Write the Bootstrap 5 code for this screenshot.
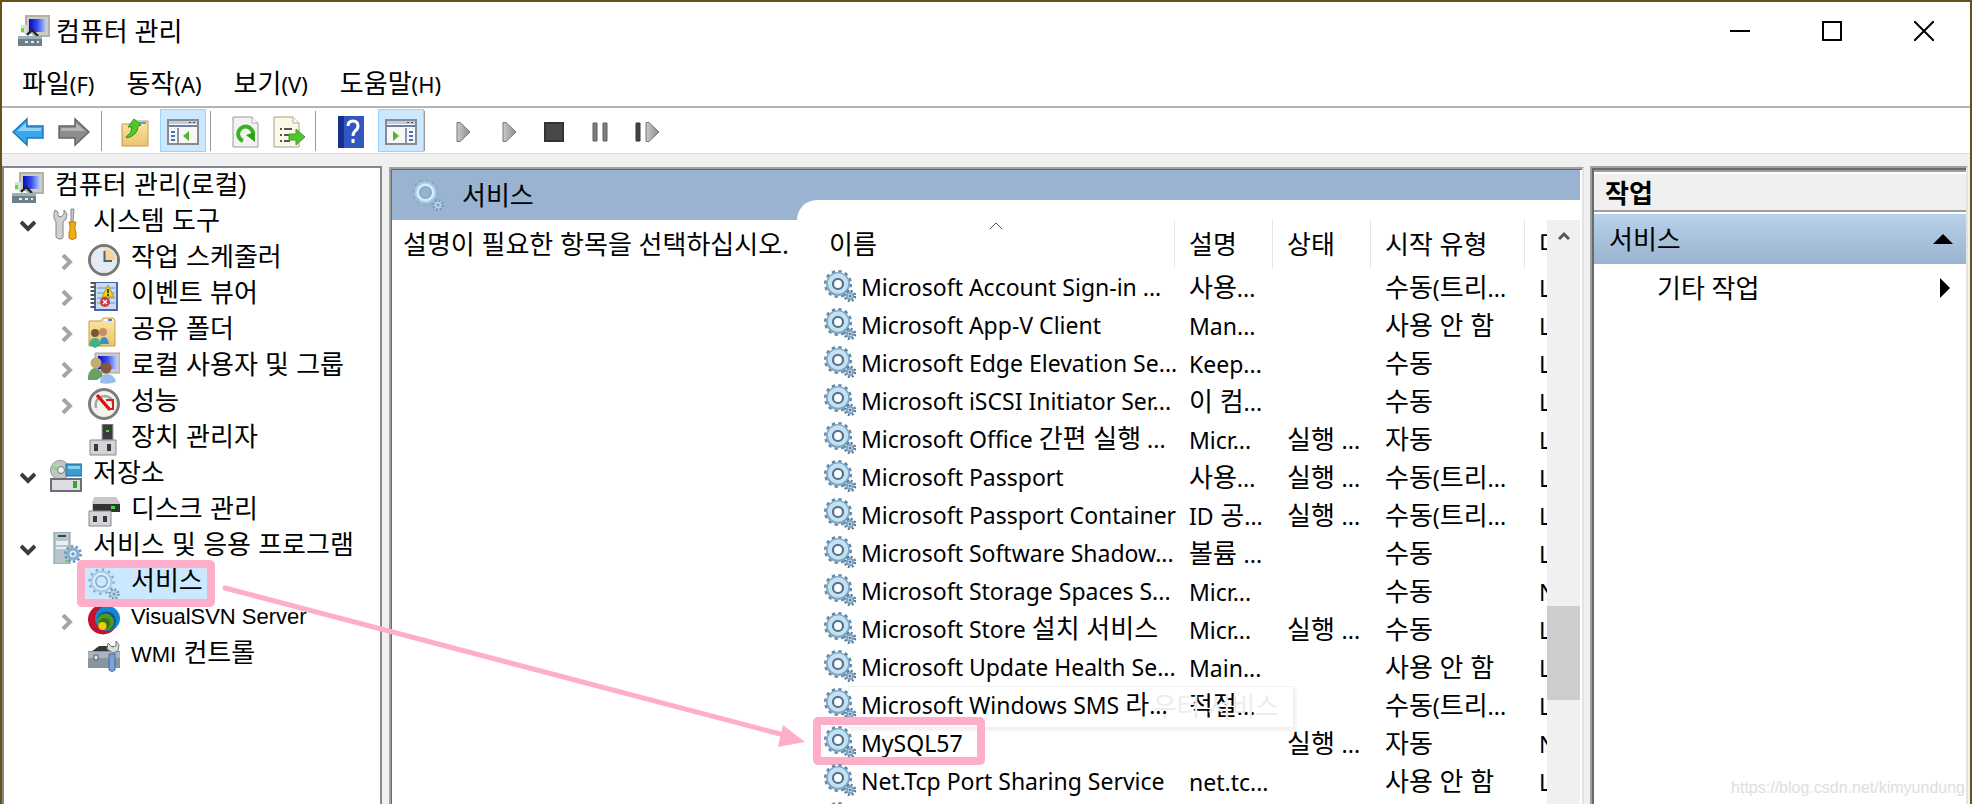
<!DOCTYPE html>
<html lang="ko">
<head>
<meta charset="utf-8">
<meta name="viewport" content="width=device-width, initial-scale=1">
<title>컴퓨터 관리</title>
<link href="https://cdn.jsdelivr.net/npm/bootstrap@5.3.0/dist/css/bootstrap.min.css" rel="stylesheet">
<style>
  :root { --ui: "Noto Sans", "Noto Sans CJK KR", sans-serif; --pink: #ffaec9; }
  body { font-family: var(--ui); font-size: 26px; color: #000; background: #f0f0f0; }
  a, a:hover { color: #000; text-decoration: none; }
  svg { display: block; flex: none; }
  .app { border: 2px solid #6b4f18; border-bottom: 0; }
  .title-bar { height: 58px; padding-left: 16px; gap: 6px; line-height: 58px; }
  .title-bar h1 { font-size: 26px; line-height: 58px; font-weight: 400; }
  .win-btn { width: 92px; height: 56px; border: 0; background: none; padding: 0; display: flex; align-items: center; justify-content: center; }
  .menu-bar { height: 46px; padding-left: 20px; gap: 32px; line-height: 46px; }
  .latin { font-size: 22px; }
  .tool-bar { height: 48px; border-top: 2px solid #b4b4b4; border-bottom: 1px solid #dadada; box-sizing: border-box; padding-left: 3px; }
  .tool { border: 1px solid transparent; background: none; height: 43px; width: 46px; padding: 2px 0 0; display: flex; align-items: center; justify-content: center; }
  .tool.active { background: #cce8ff; border-color: #99d1ff; }
  .tool-sep { width: 1px; height: 40px; background: #9a9a9a; }
  .panes { padding-top: 12px; }
  .tree-pane { width: 380px; background: #fff; border: 2px solid #828790; border-bottom: 0; font-family: "Liberation Sans", "Noto Sans CJK KR", sans-serif; }
  .tree-row { height: 36px; gap: 11px; line-height: 34px; white-space: nowrap; padding-left: 8px; }
  .tree-row > svg { margin-top: 4px; }
  .lv1 { padding-left: 16px; } .lv2 { padding-left: 54px; }
  .twist { width: 30px; margin-right: -11px; padding-top: 14px; }
  .tree-row.picked { background: linear-gradient(#cce8ff, #cce8ff) 81px 0 / 122px 100% no-repeat; position: relative; }
  .frame { position: absolute; border: 8px solid var(--pink); border-radius: 5px; pointer-events: none; }
  .tree-row .frame { left: 73px; top: -4px; width: 138px; height: 47px; }
  .mid-pane { margin: 1px 0 0 7px; border-left: 2px solid #a0a0a0; border-top: 2px solid #a0a0a0; border-right: 2px solid #e3e3e3; background: #fff; min-width: 0; }
  .mid-inner { border-left: 1px solid #696969; border-top: 1px solid #696969; background: #fff; padding-right: 2px; }
  .band { background: #99b3d1; height: 50px; padding-left: 20px; line-height: 48px; gap: 18px; }
  .intro { width: 405px; padding-left: 11px; line-height: 48px; white-space: nowrap; }
  .list-side { min-width: 0; margin-top: -20px; padding-top: 20px; background: #fff; border-top-left-radius: 20px; }
  .svc { table-layout: fixed; width: 100%; line-height: 38px; border-collapse: separate; border-spacing: 0; position: relative; }
  .svc th { font-weight: 400; height: 48px; line-height: 46px; border-right: 1px solid #e5e5e5; }
  .svc th, .svc td { padding: 0 0 0 14px; white-space: nowrap; overflow: hidden; }
  .svc td { height: 38px; line-height: 36px; }
  .svc th:last-child { border-right: 0; }
  .svc th:first-child { padding-left: 32px; position: relative; }
  .svc td:first-child { padding-left: 27px; overflow: visible; }
  .svc-name { display: flex; gap: 5px; height: 38px; line-height: 38px; font-size: 23px; position: relative; }
  .svc-name svg { margin-top: 2px; }
  .svc b { font-weight: 400; font-size: 26px; line-height: 1; }
  .svc td:not(:first-child) i { font-style: normal; font-size: 23px; line-height: 1; }
  .sort { position: absolute; left: 192px; top: 0; }
  .svc-name .frame { left: -11px; top: -7px; width: 172px; height: 48px; }
  .ghost-tip { position: absolute; left: 24px; top: 0; width: 446px; height: 42px; border: 1px solid #f1f1f1; box-shadow: 3px 3px 2px #f4f4f4; line-height: 38px; text-align: right; padding-right: 14px; font-size: 26px; color: #ededed; z-index: -1; }
  .scroll-track { width: 33px; background: #f0f0f0; margin-top: -20px; border-top: 20px solid #fff; padding-top: 10px; }
  .scroll-thumb { height: 94px; background: #cdcdcd; margin-top: 364px; }
  .act-pane { width: 378px; margin: 0 2px 0 6px; border: 2px solid #a0a0a0; border-right-color: #e3e3e3; border-bottom: 0; }
  .act-inner { border-left: 2px solid #696969; border-top: 2px solid #696969; background: #fff; }
  .act-head { border-top: 2px solid #a0a0a0; border-bottom: 2px solid #a0a0a0; background: #f0f0f0; box-shadow: inset 0 2px #fff; height: 42px; line-height: 42px; padding-left: 11px; font-size: 26px; font-weight: 700; }
  .act-group { margin-top: 2px; height: 50px; border: 0; background: linear-gradient(#b9d1ea, #99b4d1); padding: 0 13px 0 15px; }
  .act-item { height: 48px; padding: 0 16px 0 63px; }
  .arrow-note { position: absolute; left: 0; top: 0; pointer-events: none; }
  .water { position: absolute; right: 5px; bottom: 4px; font: 16px/24px "Liberation Sans", sans-serif; color: #dedede; }
</style>
</head>
<body>
<svg width="0" height="0" class="position-absolute" aria-hidden="true">
  <defs>
    <linearGradient id="blueScr" x1="0" x2="1"><stop offset="0" stop-color="#0808b8"/><stop offset=".5" stop-color="#3c50ee"/><stop offset="1" stop-color="#b9ceff"/></linearGradient>
    <linearGradient id="fold" x1="0" y1="0" x2="0" y2="1"><stop offset="0" stop-color="#fbe6a2"/><stop offset="1" stop-color="#eac46e"/></linearGradient>
    <linearGradient id="gry" x1="0" x2="1"><stop offset="0" stop-color="#c9c9c9"/><stop offset="1" stop-color="#8d8d8d"/></linearGradient>
    <symbol id="gear" viewBox="0 0 32 32">
      <circle cx="14" cy="14" r="12.300" fill="none" stroke="#5f87aa" stroke-width="3.400" stroke-dasharray="3.200 3.240"/>
      <circle cx="14" cy="14" r="8.600" fill="none" stroke="#82a8c6" stroke-width="6.800"/>
      <circle cx="14" cy="13.500" r="8" fill="none" stroke="#c3e3f2" stroke-width="4.400"/>
      <circle cx="14" cy="14" r="5" fill="#fff" stroke="#55718e" stroke-width="2.200"/>
      <circle cx="26" cy="26" r="5" fill="none" stroke="#557a9b" stroke-width="2.400" stroke-dasharray="2 1.930"/>
      <circle cx="26" cy="26" r="3.200" fill="#c3dcea" stroke="#7fa3c0" stroke-width="2"/><circle cx="26" cy="26" r="1.300" fill="#56789a"/>
    </symbol>
    <symbol id="gearPale" viewBox="0 0 32 32">
      <circle cx="13.500" cy="13.500" r="12" fill="none" stroke="#86a8c4" stroke-width="2.400" stroke-dasharray="2.400 3.880"/>
      <circle cx="13.500" cy="13.500" r="8.400" fill="none" stroke="#a7cde4" stroke-width="5"/>
      <circle cx="13.500" cy="13.500" r="7.800" fill="none" stroke="#d3effc" stroke-width="2.400"/>
      <circle cx="13.500" cy="13.500" r="5.600" fill="none" stroke="#84a6c2" stroke-width="1.200"/>
      <circle cx="26" cy="26" r="4.600" fill="#b3d0e4" stroke="#7396b4" stroke-width="2.400" stroke-dasharray="1.800 1.800"/><circle cx="26" cy="26" r="1.500" fill="#7f9db8"/>
    </symbol>
    <symbol id="comp" viewBox="0 0 32 32">
      <path d="M7 0h25v22H17l-3-3H7z" fill="#cfcdc3"/><path d="M8 1h23v20H17l-3-3H8z" fill="none" stroke="#b3b1a7" stroke-width="2"/><path d="M11 4h17v13H11z" fill="url(#blueScr)"/>
      <path d="M3 10h6v8H3z" fill="#d8dde0"/><path d="M3 13h3v4H3z" fill="#55e03c"/><path d="M9 20l5-5 6 6" fill="none" stroke="#1e2635" stroke-width="2.400"/>
      <path d="M0 21h24v10H0z" fill="#6d808a"/><path d="M0 21h24v3H0z" fill="#9eb0b8"/><path d="M7 26h3v2H7zM13 26h3v2h-3zM19 26h2v2h-2z" fill="#e7eef0"/>
    </symbol>
    <symbol id="tools" viewBox="0 0 32 32">
      <path d="M5 2l3 2v4l3 1 3-3V2l3 4-1 5-3 3v15q0 2-3 2t-4-2V14L4 10V5z" fill="#d0d0d0" stroke="#858585"/>
      <path d="M21 1h3l-1 13h-2z" fill="#c9c9c9" stroke="#8b8b8b"/><path d="M19 14h7l-1 4v4l1 2v6q-4 3-7 0v-6l1-2v-4z" fill="#f3ab0e" stroke="#bd7a06"/>
    </symbol>
    <symbol id="clock" viewBox="0 0 32 32">
      <circle cx="16" cy="16" r="14.500" fill="#e3ecf5" stroke="#777" stroke-width="3"/><circle cx="16" cy="16" r="12.600" fill="none" stroke="#e8e8e8"/>
      <path d="M16 16V4.500A11.500 11.500 0 0 1 27.500 16z" fill="#f6d49b"/><path d="M16.500 7v10H24" fill="none" stroke="#4f6473" stroke-width="2"/>
    </symbol>
    <symbol id="event" viewBox="0 0 32 32">
      <path d="M6 2h24v29H6z" fill="#4a66a8"/><path d="M8 3h20v26H8z" fill="#c8dcf2"/><path d="M9 8h18M9 13h18M9 18h18M9 23h18" stroke="#6e8fc4"/>
      <path d="M5 2v28" stroke="#555" stroke-width="5" stroke-dasharray="2 2"/><path d="M20 5l6 12H14z" fill="#f0d51f" stroke="#b99a0b"/><path d="M20 9v4M20 14v2" stroke="#222" stroke-width="1.600"/>
      <circle cx="17" cy="22" r="5" fill="#cb3a42"/><path d="M15 20l4 4m0-4l-4 4" stroke="#fff" stroke-width="1.300"/>
    </symbol>
    <symbol id="share" viewBox="0 0 32 32">
      <path d="M1 5h12l2-3h10l2 2v26H1z" fill="url(#fold)" stroke="#c79b4a"/><path d="M16 3h9v2h-9z" fill="#fff"/><path d="M20 3h4v2h-4z" fill="#3d84dd"/>
      <circle cx="7" cy="17" r="4" fill="#7a5639"/><path d="M1 29q1-7 6-7t6 7l-6 3z" fill="#44b083"/><circle cx="15" cy="16" r="4" fill="#c98e61"/><path d="M12 28q0-7 4-7t5 7z" fill="#2f95c8"/>
    </symbol>
    <symbol id="users" viewBox="0 0 32 32">
      <path d="M7 1h25v20H7z" fill="#cbc9c2" stroke="#a5a39b"/><path d="M10 4h19v13H10z" fill="url(#blueScr)"/>
      <path d="M0 24q2-8 7-8t8 8l-6 4H0z" fill="#6aa060"/><circle cx="8" cy="11" r="5.500" fill="#c3ab76"/><circle cx="18" cy="16" r="5.500" fill="#82583f"/><path d="M12 31q0-9 7-9t9 8q-8 3-16 1z" fill="#97bfe9"/>
    </symbol>
    <symbol id="perf" viewBox="0 0 32 32">
      <circle cx="16" cy="16" r="14.500" fill="#f6f3ee" stroke="#7d7d7d" stroke-width="3"/><path d="M8 20q-2-11 9-12 8 1 8 9" fill="none" stroke="#9cae9f" stroke-width="2.500"/>
      <path d="M9 7l13 15" stroke="#e01010" stroke-width="3.400"/><path d="M18 12h7v9h-5" fill="none" stroke="#c22" stroke-width="2"/>
    </symbol>
    <symbol id="device" viewBox="0 0 32 32">
      <path d="M14 0h11v16H14z" fill="#3c3c3e" stroke="#aaa"/><path d="M18 6h3v2h-3z" fill="#4be043"/><path d="M2 16h26v15H2z" fill="#d4d4d8" stroke="#88888c"/><path d="M6 20h4v7H6zM19 20h4v7h-4z" fill="#38383a"/>
    </symbol>
    <symbol id="store" viewBox="0 0 32 32">
      <circle cx="10" cy="10" r="9.500" fill="#c3c6c6" stroke="#919696"/><circle cx="11" cy="10" r="3.500" fill="#f1f1f1" stroke="#777"/><path d="M2 7l5 2" stroke="#7fe07a" stroke-width="3"/>
      <path d="M16 4h16v12H16z" fill="#3b9bcf" stroke="#1f6d9b"/><path d="M18 6h12v3H18z" fill="#8bd0ee"/><path d="M1 19h30v12H1z" fill="#dcdce4" stroke="#6e6e78" stroke-width="2"/><path d="M23 21h4v7h-4z" fill="#3ba62b"/>
    </symbol>
    <symbol id="disk" viewBox="0 0 32 32">
      <path d="M6 1h22l4 6v9H4V7z" fill="#c9c9cb"/><path d="M5 8h27v8H5z" fill="#333436"/><path d="M23 10h4v3h-4z" fill="#47dd3e"/><path d="M1 15h22v15H1z" fill="#d4d4d8" stroke="#88888c"/><path d="M5 20h4v6H5zM15 20h4v6h-4z" fill="#38383a"/>
    </symbol>
    <symbol id="server" viewBox="0 0 32 32">
      <path d="M4 0h16v32H4z" fill="#b5c6cc" stroke="#84989f"/><path d="M8 3h8v2H8z" fill="#3b464b"/><path d="M6 9h12v4H6zM6 15h12v2H6z" fill="#e9f0f2"/><path d="M15 28h3v2h-3z" fill="#59d846"/>
      <circle cx="23" cy="22" r="7.500" fill="none" stroke="#6f96bb" stroke-width="3" stroke-dasharray="2.400 2.310"/><circle cx="23" cy="22" r="5" fill="#e7f1f8" stroke="#8cb0d0" stroke-width="3.500"/><circle cx="23" cy="22" r="1.800" fill="#7596b5"/>
    </symbol>
    <symbol id="svn" viewBox="0 0 32 32">
      <circle cx="15" cy="15.500" r="15" fill="#c8102e"/><circle cx="19.500" cy="14.500" r="12.500" fill="#1089d2"/><circle cx="18.500" cy="17" r="9.500" fill="#15508c"/><circle cx="17.500" cy="18" r="8.500" fill="#4d9a22"/><circle cx="16.500" cy="19.500" r="5.500" fill="#2f7416"/><circle cx="14.500" cy="22" r="4" fill="#f2cc0c"/>
    </symbol>
    <symbol id="wmi" viewBox="0 0 32 32">
      <path d="M3 12l8-6h14l5 6z" fill="#30383c"/><path d="M0 11h32v17H0z" fill="#8795a0"/><path d="M0 12h32v6H0z" fill="#aab6bf"/><path d="M6 15h4v5H6z" fill="#e6e6e6" stroke="#505a60"/>
      <path d="M20 3l4 4 4-1V1l3 4-1 6-5 2-6-4z" fill="#dcdcdc" stroke="#777"/><path d="M21 14h6v16q-3 3-6 0z" fill="#7fa3d6" stroke="#466ba4"/>
    </symbol>
    <symbol id="open" viewBox="0 0 16 16"><path d="M1 4l7 7 7-7" fill="none" stroke="#3c3c3c" stroke-width="4"/></symbol>
    <symbol id="shut" viewBox="0 0 16 16"><path d="M5 1l7 7-7 7" fill="none" stroke="#a6a6a6" stroke-width="4"/></symbol>
    <symbol id="play" viewBox="0 0 16 22"><path d="M1 1.500l3 0 10 9.500-10 9.500H1z" fill="url(#gry)" stroke="#777"/></symbol>
  </defs>
</svg>

<div class="app vh-100 d-flex flex-column overflow-hidden position-relative">
  <header class="bg-white">
    <div class="title-bar d-flex align-items-center">
      <svg width="32" height="32"><use href="#comp"/></svg>
      <h1 class="m-0">컴퓨터 관리</h1>
      <div class="ms-auto d-flex">
        <button class="win-btn" aria-label="최소화"><svg width="20" height="20"><path d="M0 10h20" stroke="#000" stroke-width="2"/></svg></button>
        <button class="win-btn" aria-label="최대화"><svg width="20" height="20"><path d="M1 1h18v18H1z" fill="none" stroke="#000" stroke-width="2"/></svg></button>
        <button class="win-btn" aria-label="닫기"><svg width="20" height="20"><path d="M0 0l20 20M20 0L0 20" stroke="#000" stroke-width="2"/></svg></button>
      </div>
    </div>
    <nav class="menu-bar d-flex">
      <a href="#">파일<span class="latin">(F)</span></a>
      <a href="#">동작<span class="latin">(A)</span></a>
      <a href="#">보기<span class="latin">(V)</span></a>
      <a href="#">도움말<span class="latin">(H)</span></a>
    </nav>
    <div class="tool-bar d-flex align-items-center" role="toolbar">
      <button class="tool" aria-label="뒤로"><svg width="32" height="30"><path d="M1 15L15 2v7h16v12H15v7z" fill="#38a8ec" stroke="#1c78bd" stroke-width="1.500"/><path d="M5 14l9-8v5h15v3z" fill="#8fd2fa"/></svg></button>
      <button class="tool" aria-label="앞으로"><svg width="32" height="30"><path d="M31 15L17 2v7H1v12h16v7z" fill="#8c8c8c" stroke="#666" stroke-width="1.500"/><path d="M27 14l-9-8v5H3v3z" fill="#b4b4b4"/></svg></button>
      <span class="tool-sep ms-1"></span>
      <button class="tool ms-2 ps-1 me-1" aria-label="상위 수준"><svg width="28" height="30"><path d="M1 7h9l3-3h14v25H1z" fill="url(#fold)" stroke="#c29a50"/><path d="M18 5h7v2h-7z" fill="#5aa0e8"/><path d="M5 20q6-4 6-10H7l6-8 7 6-3 1q0 9-11 12z" fill="#4fc928" stroke="#2f9718"/></svg></button>
      <button class="tool active" aria-label="콘솔 트리 표시"><svg width="32" height="26"><path d="M1 1h30v24H1z" fill="#f7f7f7" stroke="#878a92" stroke-width="2"/><path d="M2 2h28v3H2z" fill="#c4ccd8"/><path d="M2 6h28v2H2z" fill="#6f809f"/><path d="M22 3h2v1h-2zM26 3h2v1h-2z" fill="#33415e"/><path d="M11 9v15" stroke="#8c95a6" stroke-width="2"/><path d="M4 13h4M4 17h4M4 21h4" stroke="#3a77bd" stroke-width="2"/><path d="M22 12v10l-6-5z" fill="#4eb52c"/></svg></button>
      <span class="tool-sep ms-1"></span>
      <button class="tool ms-2 ps-2" aria-label="새로 고침"><svg width="28" height="32"><path d="M1 1h19l6 6v24H1z" fill="#f3f3f3" stroke="#9c9c9c"/><path d="M20 1v6h6" fill="#fff" stroke="#aaa"/><path d="M11 25a7.500 7.500 0 1 1 9-3" fill="none" stroke="#37b221" stroke-width="4"/><path d="M14 19l9 7V16z" fill="#2da01a"/></svg></button>
      <button class="tool ps-1" aria-label="목록 내보내기"><svg width="34" height="32"><path d="M1 1h19l6 6v24H1z" fill="#fcf8e6" stroke="#a39e8a"/><path d="M20 1v6h6" fill="#fff" stroke="#aaa"/><path d="M7 13h2M7 19h2M7 25h2M11 13h8M11 19h6M11 25h6" stroke="#555" stroke-width="2"/><path d="M16 18h7v-5l9 8-9 8v-5h-7z" fill="#52c434" stroke="#3da024"/></svg></button>
      <span class="tool-sep ms-1"></span>
      <button class="tool ms-2 me-2 ps-2" aria-label="도움말"><svg width="26" height="32"><path d="M0 0h26v32H0z" fill="#3355bf"/><path d="M0 0h6v32H0z" fill="#16318e"/><path d="M10 10q0-5 5-5t5 5q0 3-3 5-2 2-2 5M15 23v4" fill="none" stroke="#fff" stroke-width="3"/></svg></button>
      <button class="tool active" aria-label="작업 창 표시"><svg width="32" height="26"><path d="M1 1h30v24H1z" fill="#f7f7f7" stroke="#878a92" stroke-width="2"/><path d="M2 2h28v3H2z" fill="#c4ccd8"/><path d="M2 6h28v2H2z" fill="#6f809f"/><path d="M22 3h2v1h-2zM26 3h2v1h-2z" fill="#33415e"/><path d="M21 9v15" stroke="#8c95a6" stroke-width="2"/><path d="M24 13h4M24 17h4M24 21h4" stroke="#3a77bd" stroke-width="2"/><path d="M8 12v10l6-5z" fill="#4eb52c"/></svg></button>
      <span class="tool-sep me-3"></span>
      <button class="tool" aria-label="서비스 시작"><svg width="16" height="22"><use href="#play"/></svg></button>
      <button class="tool" aria-label="서비스 계속"><svg width="16" height="22"><use href="#play"/></svg></button>
      <button class="tool pe-1" aria-label="서비스 중지"><svg width="20" height="20"><path d="M1 1h18v18H1z" fill="#484848" stroke="#333" stroke-width="2"/></svg></button>
      <button class="tool pe-1" aria-label="서비스 일시 중지"><svg width="16" height="20"><path d="M1 1h4v18H1zM11 1h4v18h-4z" fill="#7b7b7b" stroke="#5e5e5e"/></svg></button>
      <button class="tool" aria-label="서비스 다시 시작"><svg width="26" height="22"><path d="M1 2h4v18H1z" fill="#444" stroke="#333"/><path d="M11 1.500h3L24 11l-10 9.500h-3z" fill="url(#gry)" stroke="#777"/></svg></button>
    </div>
  </header>

  <main class="panes d-flex flex-grow-1 overflow-hidden">
    <nav class="tree-pane flex-shrink-0">
      <a href="#" class="tree-row d-flex"><svg width="32" height="32"><use href="#comp"/></svg>컴퓨터 관리(로컬)</a>
      <a href="#" class="tree-row lv1 d-flex"><span class="twist"><svg width="16" height="16"><use href="#open"/></svg></span><svg width="32" height="32"><use href="#tools"/></svg>시스템 도구</a>
      <a href="#" class="tree-row lv2 d-flex"><span class="twist"><svg width="16" height="16"><use href="#shut"/></svg></span><svg width="32" height="32"><use href="#clock"/></svg>작업 스케줄러</a>
      <a href="#" class="tree-row lv2 d-flex"><span class="twist"><svg width="16" height="16"><use href="#shut"/></svg></span><svg width="32" height="32"><use href="#event"/></svg>이벤트 뷰어</a>
      <a href="#" class="tree-row lv2 d-flex"><span class="twist"><svg width="16" height="16"><use href="#shut"/></svg></span><svg width="32" height="32"><use href="#share"/></svg>공유 폴더</a>
      <a href="#" class="tree-row lv2 d-flex"><span class="twist"><svg width="16" height="16"><use href="#shut"/></svg></span><svg width="32" height="32"><use href="#users"/></svg>로컬 사용자 및 그룹</a>
      <a href="#" class="tree-row lv2 d-flex"><span class="twist"><svg width="16" height="16"><use href="#shut"/></svg></span><svg width="32" height="32"><use href="#perf"/></svg>성능</a>
      <a href="#" class="tree-row lv2 d-flex"><span class="twist"></span><svg width="32" height="32"><use href="#device"/></svg>장치 관리자</a>
      <a href="#" class="tree-row lv1 d-flex"><span class="twist"><svg width="16" height="16"><use href="#open"/></svg></span><svg width="32" height="32"><use href="#store"/></svg>저장소</a>
      <a href="#" class="tree-row lv2 d-flex"><span class="twist"></span><svg width="32" height="32"><use href="#disk"/></svg>디스크 관리</a>
      <a href="#" class="tree-row lv1 d-flex"><span class="twist"><svg width="16" height="16"><use href="#open"/></svg></span><svg width="32" height="32"><use href="#server"/></svg>서비스 및 응용 프로그램</a>
      <a href="#" class="tree-row lv2 picked d-flex"><span class="twist"></span><svg width="32" height="32"><use href="#gearPale"/></svg>서비스<span class="frame"></span></a>
      <a href="#" class="tree-row lv2 d-flex"><span class="twist"><svg width="16" height="16"><use href="#shut"/></svg></span><svg width="32" height="32"><use href="#svn"/></svg><span class="latin">VisualSVN Server</span></a>
      <a href="#" class="tree-row lv2 d-flex"><span class="twist"></span><svg width="32" height="32"><use href="#wmi"/></svg><span><span class="latin">WMI</span> 컨트롤</span></a>
    </nav>

    <section class="mid-pane flex-grow-1 d-flex">
      <div class="mid-inner flex-grow-1 d-flex flex-column overflow-hidden">
        <div class="band d-flex align-items-center flex-shrink-0"><svg width="32" height="32"><use href="#gearPale"/></svg>서비스</div>
        <div class="d-flex flex-grow-1">
          <div class="intro flex-shrink-0">설명이 필요한 항목을 선택하십시오.</div>
          <div class="list-side flex-grow-1">
            <table class="svc">
              <colgroup><col><col width="98"><col width="98"><col width="154"><col width="22"></colgroup>
              <thead><tr><th>이름<svg class="sort" width="14" height="16"><path d="M1 9l6-6 6 6" fill="none" stroke="#555"/></svg></th><th>설명</th><th>상태</th><th>시작 유형</th><th>다</th></tr></thead>
              <tbody>
                <tr><td><div class="svc-name"><svg width="32" height="32"><use href="#gear"/></svg>Microsoft Account Sign-in ...</div></td><td>사용<i>...</i></td><td></td><td>수동<i>(</i>트리<i>...</i></td><td><i>L</i></td></tr>
                <tr><td><div class="svc-name"><svg width="32" height="32"><use href="#gear"/></svg>Microsoft App-V Client</div></td><td><i>Man...</i></td><td></td><td>사용 안 함</td><td><i>L</i></td></tr>
                <tr><td><div class="svc-name"><svg width="32" height="32"><use href="#gear"/></svg>Microsoft Edge Elevation Se...</div></td><td><i>Keep...</i></td><td></td><td>수동</td><td><i>L</i></td></tr>
                <tr><td><div class="svc-name"><svg width="32" height="32"><use href="#gear"/></svg>Microsoft iSCSI Initiator Ser...</div></td><td>이 컴<i>...</i></td><td></td><td>수동</td><td><i>L</i></td></tr>
                <tr><td><div class="svc-name"><svg width="32" height="32"><use href="#gear"/></svg><span>Microsoft Office <b>간편 실행</b> ...</span></div></td><td><i>Micr...</i></td><td>실행 <i>...</i></td><td>자동</td><td><i>L</i></td></tr>
                <tr><td><div class="svc-name"><svg width="32" height="32"><use href="#gear"/></svg>Microsoft Passport</div></td><td>사용<i>...</i></td><td>실행 <i>...</i></td><td>수동<i>(</i>트리<i>...</i></td><td><i>L</i></td></tr>
                <tr><td><div class="svc-name"><svg width="32" height="32"><use href="#gear"/></svg>Microsoft Passport Container</div></td><td><i>ID</i> 공<i>...</i></td><td>실행 <i>...</i></td><td>수동<i>(</i>트리<i>...</i></td><td><i>L</i></td></tr>
                <tr><td><div class="svc-name"><svg width="32" height="32"><use href="#gear"/></svg>Microsoft Software Shadow...</div></td><td>볼륨 <i>...</i></td><td></td><td>수동</td><td><i>L</i></td></tr>
                <tr><td><div class="svc-name"><svg width="32" height="32"><use href="#gear"/></svg>Microsoft Storage Spaces S...</div></td><td><i>Micr...</i></td><td></td><td>수동</td><td><i>N</i></td></tr>
                <tr><td><div class="svc-name"><svg width="32" height="32"><use href="#gear"/></svg><span>Microsoft Store <b>설치 서비스</b></span></div></td><td><i>Micr...</i></td><td>실행 <i>...</i></td><td>수동</td><td><i>L</i></td></tr>
                <tr><td><div class="svc-name"><svg width="32" height="32"><use href="#gear"/></svg>Microsoft Update Health Se...</div></td><td><i>Main...</i></td><td></td><td>사용 안 함</td><td><i>L</i></td></tr>
                <tr><td><div class="svc-name z-0"><svg width="32" height="32"><use href="#gear"/></svg><span>Microsoft Windows SMS <b>라</b>...</span><span class="ghost-tip">우터 서비스</span></div></td><td>적절<i>...</i></td><td></td><td>수동<i>(</i>트리<i>...</i></td><td><i>L</i></td></tr>
                <tr><td><div class="svc-name"><svg width="32" height="32"><use href="#gear"/></svg>MySQL57<span class="frame"></span></div></td><td></td><td>실행 <i>...</i></td><td>자동</td><td><i>N</i></td></tr>
                <tr><td><div class="svc-name"><svg width="32" height="32"><use href="#gear"/></svg>Net.Tcp Port Sharing Service</div></td><td><i>net.tc...</i></td><td></td><td>사용 안 함</td><td><i>L</i></td></tr>
                <tr><td><div class="svc-name"><svg width="32" height="32"><use href="#gear"/></svg></div></td><td></td><td></td><td></td><td></td></tr>
              </tbody>
            </table>
          </div>
          <div class="flex-shrink-0 scroll-track">
            <svg class="mx-auto" width="12" height="12"><path d="M1 9l5-5 5 5" fill="none" stroke="#555" stroke-width="3"/></svg>
            <div class="scroll-thumb"></div>
          </div>
        </div>
      </div>
    </section>

    <aside class="act-pane flex-shrink-0 d-flex">
      <div class="act-inner flex-grow-1">
        <h2 class="act-head m-0">작업</h2>
        <button class="act-group w-100 d-flex align-items-center justify-content-between">서비스<svg width="20" height="10"><path d="M0 10L10 0l10 10z"/></svg></button>
        <a href="#" class="act-item d-flex align-items-center justify-content-between">기타 작업<svg width="10" height="20"><path d="M0 0l10 10L0 20z"/></svg></a>
      </div>
    </aside>
  </main>

  <svg class="arrow-note" width="820" height="760" aria-hidden="true"><path d="M223 586L782 733" stroke="#ffaec9" stroke-width="5" stroke-linecap="round"/><path d="M803 740l-22-17-5 22z" fill="#ffaec9"/></svg>
  <div class="water">https://blog.csdn.net/kimyundung</div>
</div>
<script src="https://cdn.jsdelivr.net/npm/bootstrap@5.3.0/dist/js/bootstrap.bundle.min.js"></script>
</body>
</html>
